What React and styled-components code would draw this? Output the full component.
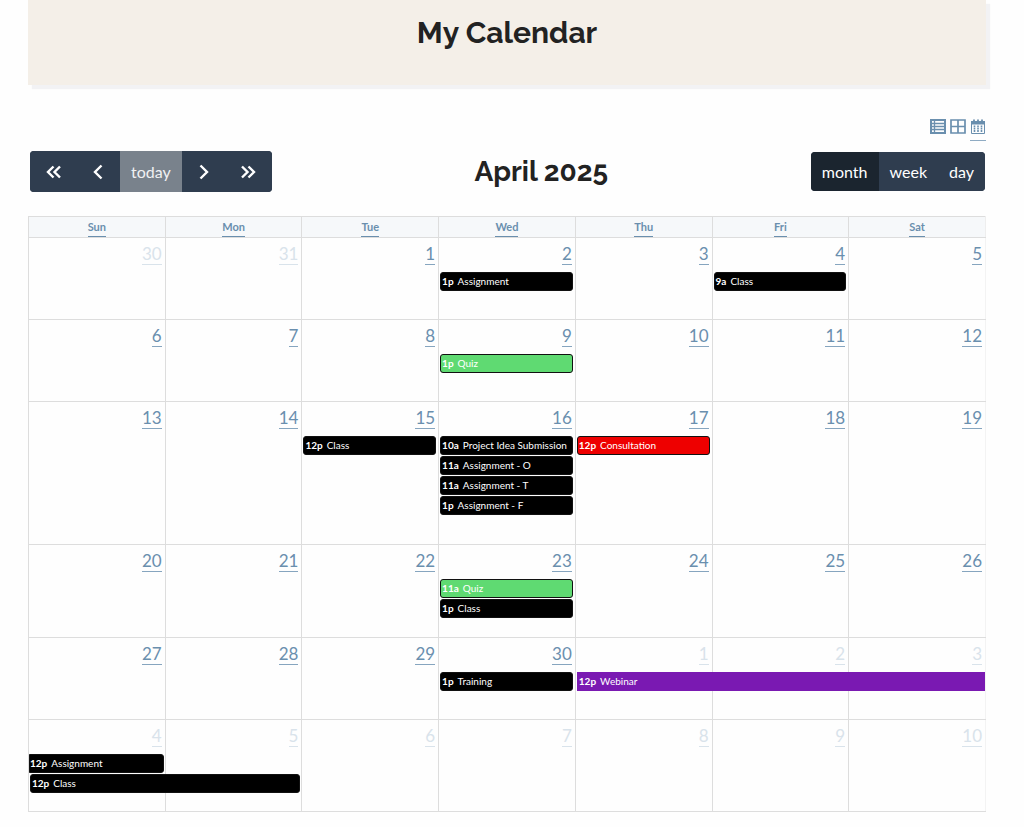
import React from "react";
import styled, { createGlobalStyle, css } from "styled-components";

const GlobalStyle = createGlobalStyle`
  *, *::before, *::after { box-sizing: border-box; }
  body {
    margin: 0;
    background: #fefefe;
    color: #222;
    font-family: Lato, "Liberation Sans", sans-serif;
    font-size: 16px;
  }
`;

const Page = styled.main`
  padding: 0 38px 15px 28px;
`;

const Banner = styled.header`
  height: 85px;
  padding-top: 13px;
  background: #f4efe8;
  box-shadow: 4px 4px 1px #f2f2f4;
  text-align: center;
`;

const Title = styled.h1`
  margin: 0;
  font-family: Raleway, Lato, sans-serif;
  font-size: 30px;
  line-height: 40px;
  font-weight: 700;
`;

const Content = styled.section`
  padding-top: 34px;
`;

const Layouts = styled.nav`
  display: flex;
  justify-content: flex-end;
  gap: 4px;
`;

const LayoutLink = styled.a`
  display: block;
  width: 16px;
  height: 22px;
  color: #6a8fae;
  border-bottom: 1px solid ${(p) => (p.$current ? "#8fabc3" : "transparent")};
  svg { display: block; }
`;

const Toolbar = styled.div`
  display: flex;
  justify-content: space-between;
  align-items: center;
  height: 41px;
  margin: 10px 1px 24px 2px;
`;

const Month = styled.h2`
  margin: 0;
  font-family: Raleway, Lato, sans-serif;
  font-size: 28px;
  line-height: 40px;
  font-weight: 700;
`;

const Group = styled.div`
  display: flex;
  overflow: hidden;
  border-radius: 4px;
  background: #2f3d4f;
`;

const Button = styled.button`
  display: flex;
  align-items: center;
  justify-content: center;
  height: ${(p) => (p.$icon || p.$muted ? 41 : 39)}px;
  min-width: ${(p) => (p.$icon ? 45 : 0)}px;
  padding: 0 11px;
  border: 0;
  background: ${(p) => (p.$muted ? "#79828c" : p.$active ? "#1b252f" : "#2f3d4f")};
  color: ${(p) => (p.$muted ? "#f0f1f3" : "#fff")};
  font: 16px Lato, sans-serif;
`;

const Calendar = styled.table`
  width: 100%;
  table-layout: fixed;
  border-collapse: collapse;
  border: 1px solid #e6e6e6;
  border-right-color: #f3f3f3;
`;

const HeadCell = styled.th`
  height: 21px;
  padding: 0;
  border: 1px solid #ddd;
  border-right-color: ${(p) => (p.$last ? "#eee" : "#ddd")};
  background: #f6f8fa;
  font-size: 11px;
  line-height: 18px;
`;

const HeadLink = styled.a`
  display: block;
  width: fit-content;
  margin: 0 auto;
  border-bottom: 1px solid #6a8fae;
  color: #6a8fae;
  text-decoration: none;
`;

const Day = styled.td`
  height: ${(p) => p.$height}px;
  padding: 7px 0 0;
  border: 1px solid #ddd;
  border-right-color: ${(p) => (p.$last ? "#f3f3f3" : "#ddd")};
  vertical-align: top;
`;

const DayLink = styled.a`
  display: block;
  width: fit-content;
  margin: 0 3px 7px auto;
  padding-bottom: 1px;
  border-bottom: 1px solid ${(p) => (p.$outside ? "#d9e3eb" : "#86a5bf")};
  color: ${(p) => (p.$outside ? "#d9e3eb" : "#6a8fae")};
  font-size: 17px;
  line-height: 18px;
  text-decoration: none;
`;

const spans = { 1: "calc(100% - 3px)", 2: "calc(200% - 1px)", 3: "calc(300% + 1px)" };

const Event = styled.a`
  position: relative;
  z-index: 1;
  display: block;
  width: ${(p) => spans[p.$span]};
  height: 19px;
  margin: 0 0 1px 1px;
  padding-left: 1px;
  border: 1px solid ${(p) => p.$border};
  border-radius: 3px;
  background: ${(p) => p.$color};
  color: #fff;
  font-size: 10px;
  line-height: 17px;
  white-space: nowrap;
  text-decoration: none;
  overflow: hidden;
  ${(p) =>
    p.$continued &&
    css`
      width: calc(100% - 1px);
      margin-left: 0;
      padding-left: 0;
      border-radius: 0 3px 3px 0;
    `}
  ${(p) => p.$open && css`border-radius: 0;`}
`;

const Time = styled.b`
  margin-right: 4px;
`;

const DAYS = ["Sun", "Mon", "Tue", "Wed", "Thu", "Fri", "Sat"];

const WEEKS = [
  { height: 82, days: [30, 31, 1, 2, 3, 4, 5] },
  { height: 82, days: [6, 7, 8, 9, 10, 11, 12] },
  { height: 143, days: [13, 14, 15, 16, 17, 18, 19] },
  { height: 93, days: [20, 21, 22, 23, 24, 25, 26] },
  { height: 82, days: [27, 28, 29, 30, 1, 2, 3] },
  { height: 92, days: [4, 5, 6, 7, 8, 9, 10] },
];

const GREEN = "#5fda72";

const EVENTS = {
  "0-3": [{ time: "1p", name: "Assignment" }],
  "0-5": [{ time: "9a", name: "Class" }],
  "1-3": [{ time: "1p", name: "Quiz", color: GREEN }],
  "2-2": [{ time: "12p", name: "Class" }],
  "2-3": [
    { time: "10a", name: "Project Idea Submission" },
    { time: "11a", name: "Assignment - O" },
    { time: "11a", name: "Assignment - T" },
    { time: "1p", name: "Assignment - F" },
  ],
  "2-4": [{ time: "12p", name: "Consultation", color: "#ee0000" }],
  "3-3": [
    { time: "11a", name: "Quiz", color: GREEN },
    { time: "1p", name: "Class" },
  ],
  "4-3": [{ time: "1p", name: "Training" }],
  "4-4": [{ time: "12p", name: "Webinar", color: "#7a19b2", border: "#7a19b2", span: 3, open: true }],
  "5-0": [
    { time: "12p", name: "Assignment", continued: true },
    { time: "12p", name: "Class", span: 2 },
  ],
};

const isOutside = (week, day) => (week === 0 && day > 20) || (week >= 4 && day < 20);

function Chevron({ double, right }) {
  const d = double ? "M9.500 3.500 4 9l5.500 5.500M16 3.500 10.500 9l5.500 5.500" : "M12.500 2.500 6 9l6.500 6.500";
  return (
    <svg width="18" height="18" viewBox="0 0 18 18" fill="none" stroke="currentColor" strokeWidth="2.4" aria-hidden="true">
      <path d={d} transform={right ? "translate(18 0) scale(-1 1)" : undefined} />
    </svg>
  );
}

function ListIcon() {
  return (
    <svg width="16" height="16" viewBox="0 0 16 16" fill="none" stroke="currentColor" aria-hidden="true">
      <path d="M1 1h14v13H1z" strokeWidth="2" />
      <path d="M1 4.500h14M1 7.500h14M1 10.500h14M4.500 1v13" strokeWidth="1.300" />
    </svg>
  );
}

function GridIcon() {
  return (
    <svg width="16" height="16" viewBox="0 0 16 16" fill="none" stroke="currentColor" strokeWidth="1.700" aria-hidden="true">
      <path d="M1 1h14v13H1zM8 1v13M1 7.500h14" />
    </svg>
  );
}

function CalendarIcon() {
  return (
    <svg width="16" height="16" viewBox="0 0 16 16" fill="none" stroke="currentColor" aria-hidden="true">
      <path d="M1 2h14v3.500H1z" fill="currentColor" stroke="none" />
      <path d="M4 .5v3M8 .5v3M12 .5v3" strokeWidth="1.800" />
      <path d="M1.500 5v9.500h13V5" />
      <path d="M4.500 6.500v7M8 6.500v7M11.500 6.500v7" strokeWidth="1.600" strokeDasharray="1.800 .5" />
    </svg>
  );
}

export default function App() {
  return (
    <>
      <GlobalStyle />
      <Page>
        <Banner>
          <Title>My Calendar</Title>
        </Banner>
        <Content>
          <Layouts aria-label="Layout">
            <LayoutLink href="#list" aria-label="List"><ListIcon /></LayoutLink>
            <LayoutLink href="#grid" aria-label="Grid"><GridIcon /></LayoutLink>
            <LayoutLink href="#calendar" aria-label="Calendar" $current><CalendarIcon /></LayoutLink>
          </Layouts>
          <Toolbar>
            <Group>
              <Button $icon aria-label="Previous year"><Chevron double /></Button>
              <Button $icon aria-label="Previous month"><Chevron /></Button>
              <Button $muted disabled>today</Button>
              <Button $icon aria-label="Next month"><Chevron right /></Button>
              <Button $icon aria-label="Next year"><Chevron double right /></Button>
            </Group>
            <Month>April 2025</Month>
            <Group>
              <Button $active>month</Button>
              <Button>week</Button>
              <Button>day</Button>
            </Group>
          </Toolbar>
          <Calendar>
            <thead>
              <tr>
                {DAYS.map((name, i) => (
                  <HeadCell key={name} scope="col" $last={i === 6}>
                    <HeadLink href={`#${name}`}>{name}</HeadLink>
                  </HeadCell>
                ))}
              </tr>
            </thead>
            <tbody>
              {WEEKS.map((week, w) => (
                <tr key={w}>
                  {week.days.map((day, d) => (
                    <Day key={d} $height={week.height} $last={d === 6}>
                      <DayLink href={`#day-${w}-${d}`} $outside={isOutside(w, day)}>{day}</DayLink>
                      {(EVENTS[`${w}-${d}`] || []).map((e) => (
                        <Event
                          key={e.time + e.name}
                          href="#event"
                          $color={e.color || "#000"}
                          $border={e.border || "#111"}
                          $span={e.span || 1}
                          $continued={e.continued}
                          $open={e.open}
                        >
                          <Time>{e.time}</Time>
                          {e.name}
                        </Event>
                      ))}
                    </Day>
                  ))}
                </tr>
              ))}
            </tbody>
          </Calendar>
        </Content>
      </Page>
    </>
  );
}
